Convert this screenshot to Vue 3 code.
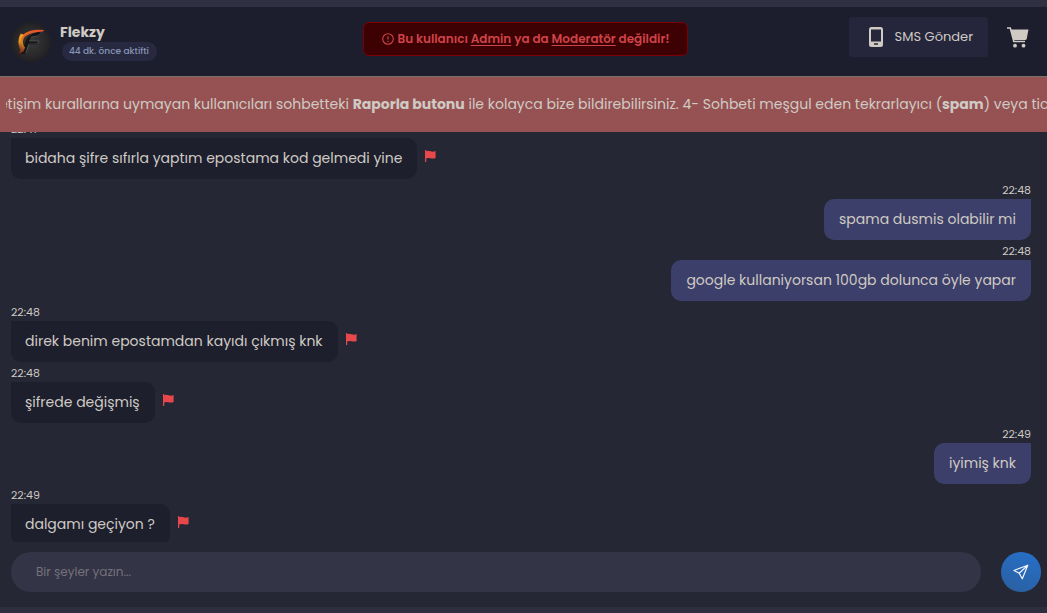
<script setup>
import { ref } from 'vue'

const draft = ref('')

const messages = [
  { id: 1, time: '22:47', text: 'bidaha şifre sıfırla yaptım epostama kod gelmedi yine', mine: false },
  { id: 2, time: '22:48', text: 'spama dusmis olabilir mi', mine: true },
  { id: 3, time: '22:48', text: 'google kullaniyorsan 100gb dolunca öyle yapar', mine: true },
  { id: 4, time: '22:48', text: 'direk benim epostamdan kayıdı çıkmış knk', mine: false },
  { id: 5, time: '22:48', text: 'şifrede değişmiş', mine: false },
  { id: 6, time: '22:49', text: 'iyimiş knk', mine: true },
  { id: 7, time: '22:49', text: 'dalgamı geçiyon ?', mine: false }
]
</script>

<template>
  <div class="chat">
    <header class="top">
      <div class="person">
        <svg class="avatar" viewBox="0 0 40 40" aria-hidden="true">
          <defs>
            <radialGradient id="disc">
              <stop offset="0" stop-color="#3b3a3a" />
              <stop offset="0.6" stop-color="#2c2b2c" />
              <stop offset="1" stop-color="#201f24" />
            </radialGradient>
            <linearGradient id="flame" x1="0.7" y1="0" x2="0.1" y2="1">
              <stop offset="0" stop-color="#e8552b" />
              <stop offset="0.45" stop-color="#e06a20" />
              <stop offset="0.62" stop-color="#d9861f" />
              <stop offset="1" stop-color="#5a1414" />
            </linearGradient>
          </defs>
          <circle cx="20" cy="20" r="20" fill="url(#disc)" />
          <path d="M32 9 L28 14 L20 15 L18 19 L28 19 L26 23 L17 23 L14 32 L10 32 L15 18 Q18 11 32 9Z" fill="#151517" />
          <path d="M31 10 L27 14 L20 15 M18 19 H28 L26 22 H18 L15 31" fill="none" stroke="#626367" stroke-width="0.6" />
          <path d="M33 8Q19 6.500 12 12.500L9.500 11.500Q5.500 20 9 27Q9.500 30.500 6 32Q12.500 32.500 14 25.500Q9.500 20 14 14.500Q20 10 32 9.500Z" fill="url(#flame)" />
          <path d="M10 12 Q7 17 9 22 Q9 16 13 13Z" fill="#eda51e" />
        </svg>
        <div class="who">
          <strong class="name">Flekzy</strong>
          <span class="seen">44 dk. önce aktifti</span>
        </div>
      </div>

      <p class="notice">
        <svg class="notice-icon" viewBox="0 0 12 12" aria-hidden="true">
          <circle cx="6" cy="6" r="5.3" fill="none" stroke="currentColor" stroke-width="1.1" />
          <path d="M6 3.2V6.6M6 7.8V9" stroke="currentColor" stroke-width="1.2" />
        </svg>
        <span>Bu kullanıcı <u>Admin</u> ya da <u>Moderatör</u> değildir!</span>
      </p>

      <div class="actions">
        <button class="sms" type="button">
          <svg class="phone" viewBox="0 0 14 20" aria-hidden="true">
            <path fill="currentColor" fill-rule="evenodd" d="M2.5 0h9A2.5 2.5 0 0 1 14 2.500v15a2.500 2.500 0 0 1-2.500 2.500h-9A2.500 2.500 0 0 1 0 17.500v-15A2.500 2.500 0 0 1 2.500 0ZM2 2.500v12h10v-12ZM5 16.200v1.600h4v-1.600Z" />
          </svg>
          SMS Gönder
        </button>
        <button class="cart" type="button" aria-label="Sepet">
          <svg viewBox="0 0 22 21" aria-hidden="true">
            <path d="M0 1H3.300L6.800 14.500H18" fill="none" stroke="currentColor" stroke-width="1.600" />
            <path d="M3.500 2.500H21.500L19.800 11.500Q19.500 13 18 13H6.500Z" fill="currentColor" />
            <circle cx="8" cy="18.700" r="1.900" fill="currentColor" />
            <circle cx="16.500" cy="18.700" r="1.900" fill="currentColor" />
          </svg>
        </button>
      </div>
    </header>

    <div class="ticker">
      <div class="ticker-window">
        <p class="ticker-text">
          iletişim kurallarına uymayan kullanıcıları sohbetteki <b>Raporla butonu</b> ile kolayca bize
          bildirebilirsiniz. 4- Sohbeti meşgul eden tekrarlayıcı (<b>spam</b>) veya ticari
        </p>
      </div>
    </div>

    <main class="stream">
      <ol class="list">
        <li v-for="m in messages" :key="m.id" class="message" :class="{ mine: m.mine }">
          <time class="time">{{ m.time }}</time>
          <div class="line">
            <p class="bubble">{{ m.text }}</p>
            <button v-if="!m.mine" class="flag" type="button" aria-label="Raporla">
              <svg viewBox="0 0 11 12" aria-hidden="true">
                <path d="M0.600 0V12" stroke="currentColor" stroke-width="1.200" />
                <path d="M1 1.200Q3 0.200 5.500 1.200T10.600 1V8Q8 9 5.500 8.200T1 8.600Z" fill="currentColor" />
              </svg>
            </button>
          </div>
        </li>
      </ol>
    </main>

    <form class="composer" @submit.prevent>
      <input v-model="draft" class="entry" type="text" aria-label="Mesaj" placeholder="Bir şeyler yazın..." />
      <button class="send" type="submit" aria-label="Gönder">
        <svg viewBox="0 0 16 16" aria-hidden="true">
          <path d="M14.800 1.200L1 6.500L6.200 9.200L9.300 14.800ZM14.800 1.200L6.200 9.200" fill="none" stroke="currentColor" stroke-width="1.200" stroke-linejoin="round" />
        </svg>
      </button>
    </form>
  </div>
</template>

<style>
body {
  background: #252734;
}
</style>

<style scoped>
.chat {
  box-sizing: border-box;
  display: flex;
  flex-direction: column;
  height: 100vh;
  border-top: 7px solid #2f3042;
  border-bottom: 6px solid #2e2f3e;
  background: #252734;
  color: #cfcac4;
  font-family: Poppins, Inter, "Noto Sans", sans-serif;
}
button {
  padding: 0;
  border: 0;
  background: none;
  color: inherit;
  font: inherit;
}
svg {
  display: block;
}
p {
  margin: 0;
}
.top {
  display: grid;
  grid-template-columns: 1fr auto 1fr;
  align-items: start;
  flex: none;
  box-sizing: border-box;
  height: 70px;
  padding: 10px 7px 0 11px;
  border-bottom: 1px solid #77716b;
  background: #1d1e2d;
}
.person {
  display: flex;
  gap: 9px;
  padding-top: 5px;
}
.avatar {
  width: 40px;
  height: 40px;
}
.who {
  display: flex;
  flex-direction: column;
  align-items: flex-start;
}
.name {
  font-size: 14px;
  line-height: 20px;
  font-weight: 700;
}
.seen {
  margin-left: 2px;
  padding: 0 8px 0 7px;
  border-radius: 10px;
  background: #272941;
  color: #8796b5;
  font-size: 9px;
  line-height: 19px;
  font-weight: 500;
}
.notice {
  display: flex;
  align-items: center;
  gap: 4px;
  box-sizing: border-box;
  height: 34px;
  margin-top: 5px;
  padding: 0 18px;
  border: 1px solid #790007;
  border-radius: 6px;
  background: #3d0003;
  color: #ce4348;
  font-size: 12px;
  font-weight: 600;
  white-space: nowrap;
}
.notice u {
  text-underline-offset: 2px;
}
.notice-icon {
  width: 12px;
  height: 12px;
}
.actions {
  display: flex;
  justify-content: flex-end;
  gap: 19px;
  padding-right: 11px;
}
.sms {
  display: flex;
  align-items: center;
  gap: 12px;
  height: 40px;
  padding: 0 15px 0 20px;
  border-radius: 3px;
  background: #25263b;
  font-size: 13px;
}
.phone {
  width: 14px;
  height: 20px;
}
.cart {
  height: 40px;
}
.cart svg {
  width: 22px;
  height: 21px;
}
.ticker {
  flex: none;
  padding-left: 6px;
  background: #965253;
}
.ticker-window {
  overflow: hidden;
}
.ticker-text {
  margin-left: -14px;
  font-size: 14px;
  line-height: 55px;
  white-space: nowrap;
}
.stream {
  display: flex;
  flex: 1;
  flex-direction: column;
  justify-content: flex-end;
  min-height: 0;
  overflow: hidden;
}
.list {
  margin: 0 0 -3px;
  padding: 0 16px 0 11px;
  list-style: none;
}
.message {
  display: flex;
  flex-direction: column;
  align-items: flex-start;
}
.message.mine {
  align-items: flex-end;
}
.time {
  padding-top: 2px;
  font-size: 11px;
  line-height: 18px;
}
.line {
  display: flex;
  gap: 8px;
}
.bubble {
  padding: 0 15px 0 14px;
  border-radius: 0 10px 10px 10px;
  background: #1d1f2d;
  font-size: 14px;
  line-height: 41px;
}
.mine .bubble {
  padding: 0 15px;
  border-radius: 10px 0 10px 10px;
  background: #3c3f69;
}
.flag {
  align-self: flex-start;
  padding-top: 12px;
  color: #e8484b;
}
.flag svg {
  width: 11px;
  height: 12px;
}
.composer {
  display: flex;
  flex: none;
  gap: 20px;
  padding: 10px 6px 15px 11px;
}
.entry {
  box-sizing: border-box;
  flex: 1;
  min-width: 0;
  height: 40px;
  padding: 0 25px;
  border: 0;
  border-radius: 20px;
  outline: 0;
  background: #333446;
  color: inherit;
  font: 12px Poppins, Inter, "Noto Sans", sans-serif;
}
.entry::placeholder {
  color: #74727a;
  opacity: 1;
}
.send {
  display: grid;
  place-items: center;
  width: 40px;
  height: 40px;
  border-radius: 50%;
  background: linear-gradient(200deg, #2770cb, #2a5f9e);
  color: #f2f5fa;
}
.send svg {
  width: 16px;
  height: 16px;
}
</style>
